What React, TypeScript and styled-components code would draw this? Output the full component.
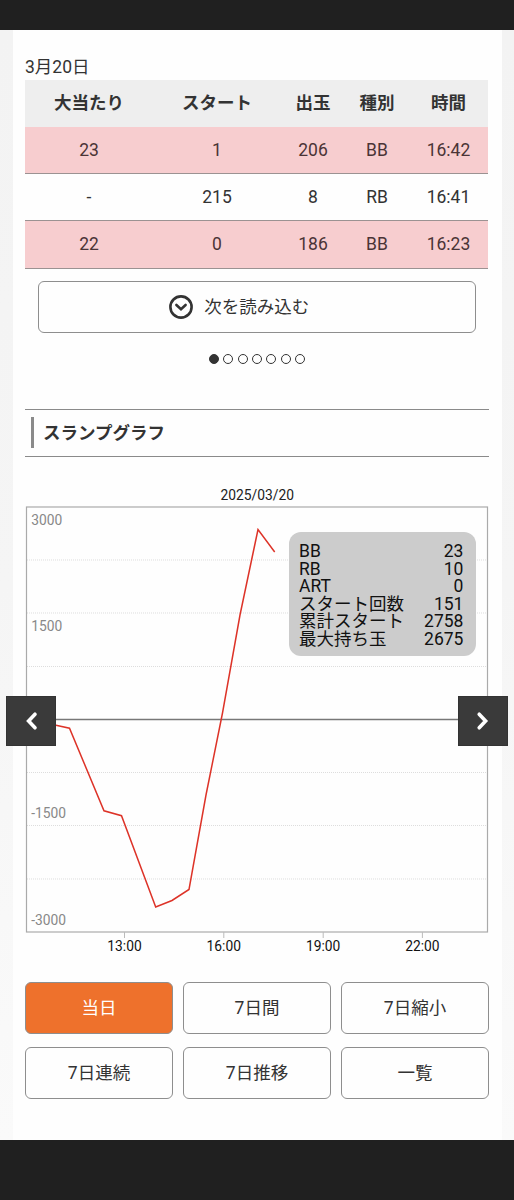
import React from "react";
import styled, { createGlobalStyle, css } from "styled-components";

const GlobalStyle = createGlobalStyle`
  * { box-sizing: border-box; }
  body {
    margin: 0;
    background: #202020;
    color: #333;
    font-family: Roboto, "Noto Sans CJK JP", sans-serif;
    font-size: 17.5px;
    line-height: 26px;
  }
`;

const Screen = styled.div`
  width: 514px;
  height: 1200px;
  padding: 30px 0 60px;
  background: #202020;
`;

const Page = styled.div`
  height: 1110px;
  padding: 0 12.5px;
  background: linear-gradient(#f3f3f3, #f5f5f5 50%, #fafafa);
`;

const Card = styled.main`
  height: 100%;
  padding: 25px 12.5px 0;
  background: #fefefe;
`;

const DateLabel = styled.div`
  height: 25px;
  line-height: 25px;
`;

const Table = styled.div`
  width: 463px;
`;

const Row = styled.div<{ $hit?: boolean; $head?: boolean }>`
  display: grid;
  grid-template-columns: 128px 128px 64px 64px 79px;
  align-items: center;
  text-align: center;
  height: 47.4px;
  background: ${(p) => (p.$head ? "#eee" : p.$hit ? "#f7cdcf" : "transparent")};
  border-bottom: 1px solid #9b9292;
  ${(p) =>
    p.$head &&
    css`
      height: 46.5px;
      font-weight: 700;
      border-bottom: 0;
    `}
  ${(p) => p.$hit && css`color: #4a3436;`}
`;

const Outlined = styled.button<{ $active?: boolean }>`
  display: flex;
  align-items: center;
  justify-content: center;
  height: 52px;
  padding: 0;
  border: 1px solid #8e8e8e;
  border-radius: 6px;
  background: ${(p) => (p.$active ? "#ee712c" : "#fefefe")};
  color: ${(p) => (p.$active ? "#fff" : "#333")};
  font: inherit;
`;

const LoadMore = styled(Outlined)`
  width: 438.5px;
  margin: 12.3px 0 0 12.5px;
  gap: 11.5px;
  padding-right: 35.5px;
`;

const Dots = styled.div`
  display: flex;
  justify-content: center;
  gap: 4.4px;
  margin-top: 21px;
`;

const Dot = styled.span<{ $on?: boolean }>`
  width: 10px;
  height: 10px;
  border: 1px solid #333;
  border-radius: 50%;
  background: ${(p) => (p.$on ? "#333" : "transparent")};
`;

const Heading = styled.h2`
  display: flex;
  align-items: center;
  gap: 9px;
  height: 48px;
  margin: 45px 0 0;
  padding-left: 6px;
  border-top: 1px solid #8a8a8a;
  border-bottom: 1px solid #8a8a8a;
  font-size: 17.5px;
  font-weight: 700;

  &::before {
    content: "";
    width: 3px;
    height: 31px;
    background: #8a8a8a;
  }
`;

const ChartArea = styled.section`
  position: relative;
  height: 525px;
  margin: 0 -12.5px;
`;

const Plot = styled.svg`
  display: block;
  font-size: 13.8px;
`;

const Stats = styled.dl`
  position: absolute;
  left: 276.5px;
  top: 75px;
  width: 187px;
  height: 124px;
  margin: 0;
  padding: 11.4px 12.6px 0 10px;
  border-radius: 12px;
  background: #ccc;
  color: #111;
  line-height: 17.5px;
`;

const Stat = styled.div`
  display: flex;
  justify-content: space-between;
  height: 17.5px;

  dd { margin: 0; }
`;

const Arrow = styled.button<{ $side: "left" | "right" }>`
  position: absolute;
  top: 239px;
  ${(p) => p.$side}: -6.5px;
  display: flex;
  align-items: center;
  justify-content: center;
  width: 50px;
  height: 50px;
  padding: 0;
  border: 1px solid #333;
  background: #3a3a3a;
`;

const Ranges = styled.div`
  display: grid;
  grid-template-columns: repeat(3, 148px);
  column-gap: 10px;
  row-gap: 13.5px;
`;

const columns = ["大当たり", "スタート", "出玉", "種別", "時間"];
const records = [
  { hit: true, cells: ["23", "1", "206", "BB", "16:42"] },
  { hit: false, cells: ["-", "215", "8", "RB", "16:41"] },
  { hit: true, cells: ["22", "0", "186", "BB", "16:23"] },
];
const stats = [
  ["BB", "23"],
  ["RB", "10"],
  ["ART", "0"],
  ["スタート回数", "151"],
  ["累計スタート", "2758"],
  ["最大持ち玉", "2675"],
];
const ranges = ["当日", "7日間", "7日縮小", "7日連続", "7日推移", "一覧"];
const gridLines = [560, 613, 666.5, 772.5, 825.5, 879];
const yLabels: [string, number][] = [["3000", 525], ["1500", 631], ["-1500", 818], ["-3000", 925]];
const xLabels: [string, number][] = [["13:00", 124.5], ["16:00", 223.8], ["19:00", 323.2], ["22:00", 422.4]];

function SlumpChart() {
  return (
    <Plot width="489" height="525" viewBox="13 457 489 525">
      <text x="257.3" y="499.5" textAnchor="middle" fill="#222">2025/03/20</text>
      {gridLines.map((y) => (
        <line key={y} x1="27" x2="487" y1={y} y2={y} stroke="#ddd" strokeDasharray="1 1" />
      ))}
      <rect x="26.5" y="507" width="461" height="425" fill="none" stroke="#aaa" strokeWidth="1.2" />
      <line x1="26.5" x2="487.5" y1="719.5" y2="719.5" stroke="#777" strokeWidth="1.3" />
      {yLabels.map(([label, y]) => (
        <text key={label} x="31.2" y={y} fill="#888">{label}</text>
      ))}
      {xLabels.map(([label, x]) => (
        <g key={label}>
          <line x1={x} x2={x} y1="932" y2="938" stroke="#bbb" />
          <text x={x} y="951" textAnchor="middle" fill="#111">{label}</text>
        </g>
      ))}
      <polyline
        points="27,720 56,725.3 69.5,728.2 104,810.8 121.5,815.7 155.7,907 172,900.5 189,889.5 206,795 222.5,713 240,615 258,529.5 274.7,552"
        fill="none"
        stroke="#dd3328"
        strokeWidth="1.5"
      />
    </Plot>
  );
}

const Chevron = ({ d }: { d: string }) => (
  <svg width="20" height="20" viewBox="0 0 20 20" fill="none" stroke="#fff" strokeWidth="3.6" strokeLinecap="round" strokeLinejoin="miter">
    <path d={d} />
  </svg>
);

export default function App() {
  return (
    <Screen>
      <GlobalStyle />
      <Page>
        <Card>
          <DateLabel>3月20日</DateLabel>
          <Table>
            <Row $head>
              {columns.map((c) => <span key={c}>{c}</span>)}
            </Row>
            {records.map((r) => (
              <Row key={r.cells[4]} $hit={r.hit}>
                {r.cells.map((c, i) => <span key={i}>{c}</span>)}
              </Row>
            ))}
          </Table>
          <LoadMore>
            <svg width="24" height="24" viewBox="0 0 24 24" fill="none" stroke="#333" strokeWidth="2.6" strokeLinecap="round">
              <circle cx="12" cy="12" r="10.6" />
              <path d="M7.4 10 12 14.2 16.6 10" strokeLinejoin="miter" />
            </svg>
            次を読み込む
          </LoadMore>
          <Dots>
            {[0, 1, 2, 3, 4, 5, 6].map((i) => <Dot key={i} $on={i === 0} />)}
          </Dots>
          <Heading>スランプグラフ</Heading>
          <ChartArea>
            <SlumpChart />
            <Stats>
              {stats.map(([name, value]) => (
                <Stat key={name}>
                  <dt>{name}</dt>
                  <dd>{value}</dd>
                </Stat>
              ))}
            </Stats>
            <Arrow $side="left" aria-label="前へ"><Chevron d="M14 3.2 7.6 10 14 16.8" /></Arrow>
            <Arrow $side="right" aria-label="次へ"><Chevron d="M6.2 3.2 12.6 10 6.2 16.8" /></Arrow>
          </ChartArea>
          <Ranges>
            {ranges.map((r, i) => <Outlined key={r} $active={i === 0}>{r}</Outlined>)}
          </Ranges>
        </Card>
      </Page>
    </Screen>
  );
}
